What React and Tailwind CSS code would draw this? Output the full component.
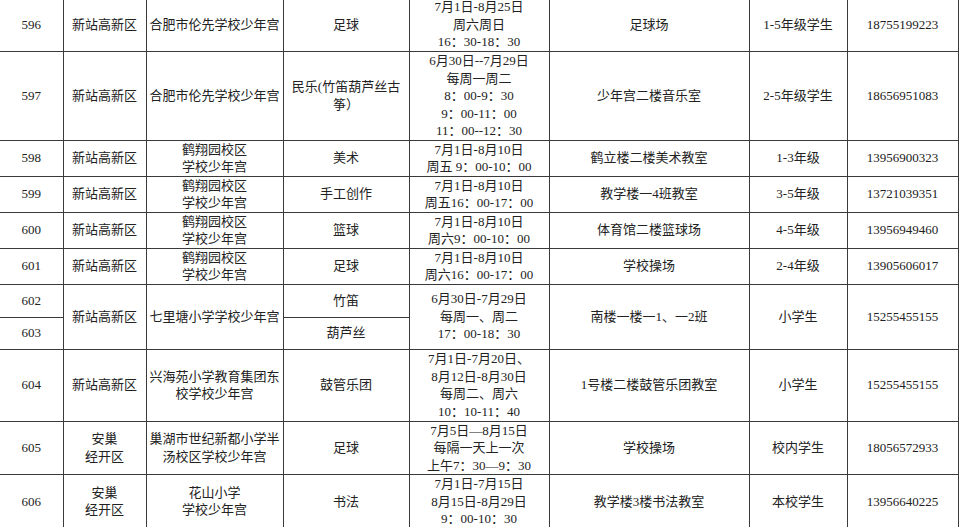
const COLS = [63, 83, 137, 126, 140, 200, 98, 111]

const ROWS = [
  { h: 54, no: '596', area: ['新站高新区'], school: ['合肥市伦先学校少年宫'], item: ['足球'], time: ['7月1日-8月25日', '周六周日', '16：30-18：30'], place: '足球场', who: '1-5年级学生', tel: '18755199223' },
  { h: 87, no: '597', area: ['新站高新区'], school: ['合肥市伦先学校少年宫'], item: ['民乐(竹笛葫芦丝古', '筝）'], time: ['6月30日--7月29日', '每周一周二', '8：00-9：30', '9：00-11：00', '11：00--12：30'], place: '少年宫二楼音乐室', who: '2-5年级学生', tel: '18656951083' },
  { h: 36, no: '598', area: ['新站高新区'], school: ['鹤翔园校区', '学校少年宫'], item: ['美术'], time: ['7月1日-8月10日', '周五 9：00-10：00'], place: '鹤立楼二楼美术教室', who: '1-3年级', tel: '13956900323' },
  { h: 35, no: '599', area: ['新站高新区'], school: ['鹤翔园校区', '学校少年宫'], item: ['手工创作'], time: ['7月1日-8月10日', '周五16：00-17：00'], place: '教学楼一4班教室', who: '3-5年级', tel: '13721039351' },
  { h: 35, no: '600', area: ['新站高新区'], school: ['鹤翔园校区', '学校少年宫'], item: ['篮球'], time: ['7月1日-8月10日', '周六9：00-10：00'], place: '体育馆二楼篮球场', who: '4-5年级', tel: '13956949460' },
  { h: 36, no: '601', area: ['新站高新区'], school: ['鹤翔园校区', '学校少年宫'], item: ['足球'], time: ['7月1日-8月10日', '周六16：00-17：00'], place: '学校操场', who: '2-4年级', tel: '13905606017' },
]

const ROWS_B = [
  { h: 72, no: '604', area: ['新站高新区'], school: ['兴海苑小学教育集团东', '校学校少年宫'], item: ['鼓管乐团'], time: ['7月1日-7月20日、', '8月12日-8月30日', '每周二、周六', '10：10-11：40'], place: '1号楼二楼鼓管乐团教室', who: '小学生', tel: '15255455155' },
  { h: 53, no: '605', area: ['安巢', '经开区'], school: ['巢湖市世纪新都小学半', '汤校区学校少年宫'], item: ['足球'], time: ['7月5日—8月15日', '每隔一天上一次', '上午7：30—9：30'], place: '学校操场', who: '校内学生', tel: '18056572933' },
  { h: 52, no: '606', area: ['安巢', '经开区'], school: ['花山小学', '学校少年宫'], item: ['书法'], time: ['7月1日-7月15日', '8月15日-8月29日', '9：00-10：30'], place: '教学楼3楼书法教室', who: '本校学生', tel: '13956640225' },
]

const cell = 'border border-[#3a3a3a] p-0 text-center align-middle'

function Lines({ items }) {
  return items.map((t, i) => <div key={i}>{t}</div>)
}

function Row({ r }) {
  return (
    <tr>
      <td className={`${cell} border-l-0`} style={{ height: r.h }}>{r.no}</td>
      <td className={cell}><Lines items={r.area} /></td>
      <td className={cell}><Lines items={r.school} /></td>
      <td className={cell}><Lines items={r.item} /></td>
      <td className={cell}><Lines items={r.time} /></td>
      <td className={cell}>{r.place}</td>
      <td className={cell}>{r.who}</td>
      <td className={cell}>{r.tel}</td>
    </tr>
  )
}

export default function App() {
  return (
    <div className="w-[960px] h-[527px] overflow-hidden bg-white">
      <table
        className="table-fixed border-collapse w-[958px] -mt-[3px] text-[13px] leading-[17.5px] text-[#222]"
        style={{ fontFamily: '"Liberation Serif", "Noto Sans CJK SC", serif' }}
      >
        <colgroup>
          {COLS.map((w, i) => <col key={i} style={{ width: w }} />)}
        </colgroup>
        <tbody>
          {ROWS.map(r => <Row key={r.no} r={r} />)}
          <tr>
            <td className={`${cell} border-l-0 h-[33px]`}>602</td>
            <td className={cell} rowSpan={2}>新站高新区</td>
            <td className={cell} rowSpan={2}>七里塘小学学校少年宫</td>
            <td className={cell}>竹笛</td>
            <td className={cell} rowSpan={2}>
              <Lines items={['6月30日-7月29日', '每周一、周二', '17：00-18：30']} />
            </td>
            <td className={cell} rowSpan={2}>南楼一楼一1、一2班</td>
            <td className={cell} rowSpan={2}>小学生</td>
            <td className={cell} rowSpan={2}>15255455155</td>
          </tr>
          <tr>
            <td className={`${cell} border-l-0 h-[32px]`}>603</td>
            <td className={cell}>葫芦丝</td>
          </tr>
          {ROWS_B.map(r => <Row key={r.no} r={r} />)}
          <tr>
            {COLS.map((w, i) => (
              <td key={i} className={`${cell} h-[30px] ${i === 0 ? 'border-l-0' : ''}`}></td>
            ))}
          </tr>
        </tbody>
      </table>
    </div>
  )
}
